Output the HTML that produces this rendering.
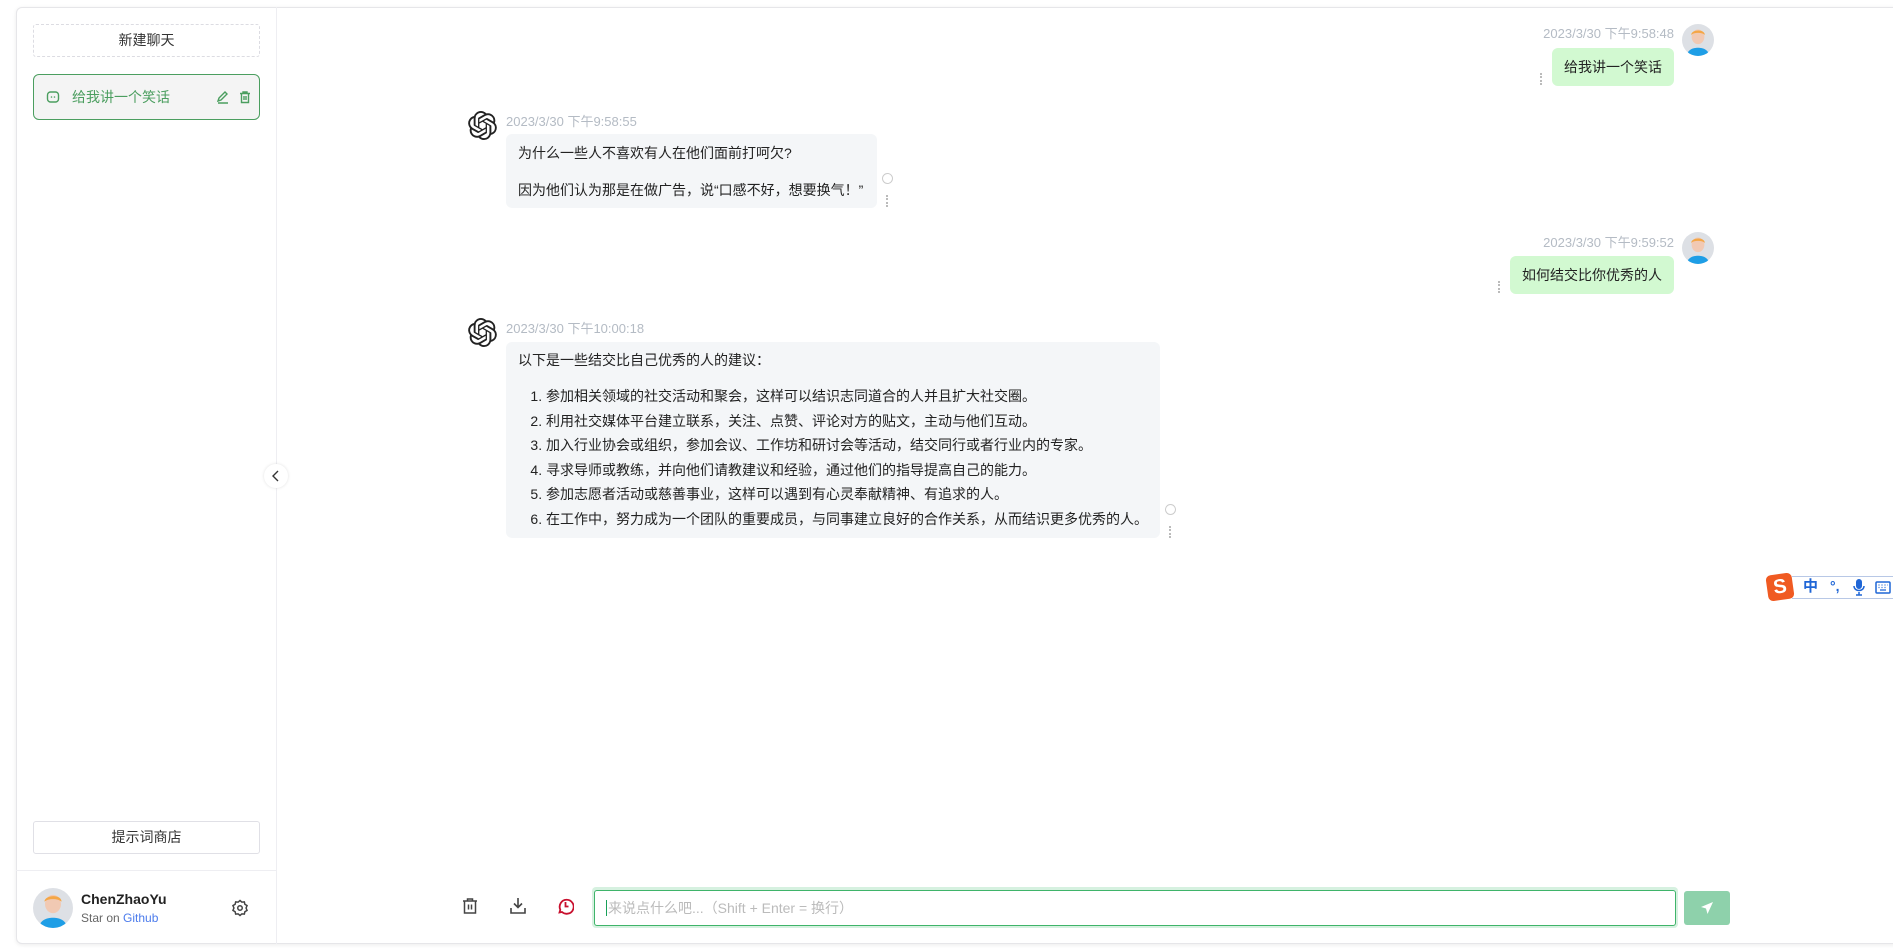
<!DOCTYPE html>
<html><head><meta charset="utf-8"><style>
*{box-sizing:border-box;margin:0;padding:0}
body{width:1893px;height:948px;overflow:hidden;background:#fff;font-family:"Liberation Sans","Noto Sans CJK SC",sans-serif;font-size:14px;color:#333;position:relative}
.abs{position:absolute}
.card{left:16px;top:7px;width:1890px;height:937px;border:1px solid #e6e6e9;border-radius:6px;box-shadow:0 1px 4px rgba(0,0,0,.08);background:#fff}
.side{left:16px;top:7px;width:261px;height:937px;border-right:1px solid #eeeef2}
.btn{border:1px solid #e0e0e6;border-radius:3px;text-align:center;color:#333;font-size:14px}
.time{color:#b4bbc4;font-size:13px}
.ub{background:#d2f9d1;border-radius:6px;color:#222;padding:0 12px;line-height:38px;font-size:14px}
.ab{background:#f4f6f8;border-radius:6px;color:#222;padding:8px 12px;font-size:14px}
.dots{width:2px;height:12px;border-left:2px dotted #bbb}
.ring{width:11px;height:11px;border:1.5px solid #ccc;border-radius:50%}
ol{padding-left:28px;margin-top:14px}
li{line-height:24.5px}
</style></head><body>
<div class="abs card"></div>
<div class="abs side"></div>
<div class="abs btn" style="left:33px;top:24px;width:227px;height:33px;line-height:31px;border:1px dashed #dcdce2">新建聊天</div>
<div class="abs" style="left:33px;top:74px;width:227px;height:46px;border:1px solid #4b9e5f;border-radius:6px;background:#f4f4f4"></div>
<svg class="abs" style="left:46px;top:90px" width="14" height="14" viewBox="0 0 14 14"><rect x="1.5" y="2" width="11" height="10" rx="3" fill="none" stroke="#4b9e5f" stroke-width="1.4"/><circle cx="5.5" cy="7" r=".8" fill="#4b9e5f"/><circle cx="8.5" cy="7" r=".8" fill="#4b9e5f"/></svg>
<div class="abs" style="left:72px;top:88px;color:#4b9e5f;font-size:14px;line-height:18px">给我讲一个笑话</div>
<svg class="abs" style="left:216px;top:90px" width="14" height="14" viewBox="0 0 14 14" fill="none" stroke="#4b9e5f" stroke-width="1.4"><path d="M2 11l1-3 6-6 2 2-6 6-3 1zM2 13h10"/></svg>
<svg class="abs" style="left:238px;top:90px" width="14" height="14" viewBox="0 0 14 14" fill="none" stroke="#4b9e5f" stroke-width="1.4"><path d="M2 3.5h10M5 3.5V2h4v1.5M3.5 3.5v9h7v-9M6 6v4M8 6v4"/></svg>
<div class="abs btn" style="left:33px;top:821px;width:227px;height:33px;line-height:31px">提示词商店</div>
<div class="abs" style="left:16px;top:870px;width:261px;border-top:1px solid #eeeef2"></div>
<svg class="abs" style="left:33px;top:888px" width="40" height="40" viewBox="0 0 35 35"><defs><clipPath id="c1"><circle cx="17.5" cy="17.5" r="17.5"/></clipPath></defs><g clip-path="url(#c1)"><rect width="35" height="35" fill="#dde0e5"/><ellipse cx="17.5" cy="14" rx="7" ry="8" fill="#f1c9b3"/><path d="M10 12c0-6 15-7 15 0-3-3-12-3-15 0z" fill="#f4a646"/><path d="M5 35c1-7 7-9 12.5-9S29 28 30 35z" fill="#1e9ee6"/></g></svg>
<div class="abs" style="left:81px;top:891px;font-weight:bold;font-size:14px;color:#222">ChenZhaoYu</div>
<div class="abs" style="left:81px;top:911px;font-size:12px;color:#666">Star on <span style="color:#4b7bec">Github</span></div>
<svg class="abs" style="left:231px;top:899px" width="18" height="18" viewBox="0 0 24 24" fill="none" stroke="#444" stroke-width="2"><path d="M12 2l2.5 2.2 3.3-.3.7 3.2 2.9 1.7-1.3 3.2 1.3 3.2-2.9 1.7-.7 3.2-3.3-.3L12 22l-2.5-2.2-3.3.3-.7-3.2-2.9-1.7L3.9 12 2.6 8.8l2.9-1.7.7-3.2 3.3.3z"/><circle cx="12" cy="12" r="3"/></svg>
<div class="abs" style="left:264px;top:464px;width:24px;height:24px;border-radius:50%;background:#fff;box-shadow:0 0 3px rgba(0,0,0,.12)"></div>
<svg class="abs" style="left:271px;top:469px" width="10" height="14" viewBox="0 0 10 14"><path d="M7 2L2 7l5 5" fill="none" stroke="#333" stroke-width="1.4"/></svg>

<div class="abs time" style="right:219px;top:23px">2023/3/30 下午9:58:48</div>
<svg class="abs" style="left:1682px;top:24px" width="32" height="32" viewBox="0 0 35 35"><defs><clipPath id="c2"><circle cx="17.5" cy="17.5" r="17.5"/></clipPath></defs><g clip-path="url(#c2)"><rect width="35" height="35" fill="#dde0e5"/><ellipse cx="17.5" cy="14" rx="7" ry="8" fill="#f1c9b3"/><path d="M10 12c0-6 15-7 15 0-3-3-12-3-15 0z" fill="#f4a646"/><path d="M5 35c1-7 7-9 12.5-9S29 28 30 35z" fill="#1e9ee6"/></g></svg>
<div class="abs ub" style="left:1552px;top:48px;width:122px;">给我讲一个笑话</div>
<div class="abs dots" style="left:1540px;top:73px"></div>

<svg class="abs" style="left:468px;top:111px" width="29" height="29" viewBox="0 0 24 24"><path fill="#222" d="M22.28 9.82a5.98 5.98 0 0 0-.52-4.91 6.05 6.05 0 0 0-6.51-2.9A6.07 6.07 0 0 0 4.98 4.18a5.98 5.98 0 0 0-4 2.9 6.05 6.05 0 0 0 .74 7.1 5.98 5.98 0 0 0 .51 4.91 6.05 6.05 0 0 0 6.52 2.9A5.98 5.98 0 0 0 13.26 24a6.06 6.06 0 0 0 5.77-4.21 5.99 5.99 0 0 0 4-2.9 6.06 6.06 0 0 0-.75-7.07zm-9.02 12.61a4.48 4.48 0 0 1-2.88-1.04l.14-.08 4.78-2.76a.8.8 0 0 0 .39-.68v-6.74l2.02 1.17a.07.07 0 0 1 .04.05v5.58a4.5 4.5 0 0 1-4.49 4.5zm-9.660-4.13a4.47 4.47 0 0 1-.53-3.01l.14.09 4.78 2.76a.77.77 0 0 0 .78 0l5.84-3.37v2.33a.08.08 0 0 1-.03.06l-4.84 2.79a4.5 4.5 0 0 1-6.14-1.65zM2.34 7.9a4.49 4.49 0 0 1 2.37-1.97v5.68a.77.77 0 0 0 .39.68l5.81 3.35-2.02 1.17a.08.08 0 0 1-.07 0L4 14.02A4.5 4.5 0 0 1 2.34 7.87zm16.6 3.86L13.1 8.36l2.02-1.16a.08.08 0 0 1 .07 0l4.83 2.79a4.49 4.49 0 0 1-.68 8.1v-5.68a.79.79 0 0 0-.41-.67zm2.01-3.02l-.14-.09-4.77-2.78a.78.78 0 0 0-.79 0L9.41 9.23V6.9a.07.07 0 0 1 .03-.06l4.83-2.79a4.5 4.5 0 0 1 6.68 4.66zM8.31 12.86l-2.02-1.16a.08.08 0 0 1-.04-.06V6.07a4.5 4.5 0 0 1 7.38-3.45l-.14.08-4.78 2.76a.8.8 0 0 0-.39.68zm1.1-2.37l2.6-1.5 2.61 1.5v3l-2.6 1.5-2.61-1.5z"/></svg>
<div class="abs time" style="left:506px;top:111px">2023/3/30 下午9:58:55</div>
<div class="abs ab" style="left:506px;top:134px;width:371px;height:74px;line-height:20px;padding-top:9px">为什么一些人不喜欢有人在他们面前打呵欠?<div style="margin-top:17px">因为他们认为那是在做广告，说“口感不好，想要换气！”</div></div>
<div class="abs ring" style="left:882px;top:173px"></div>
<div class="abs dots" style="left:886px;top:195px"></div>

<div class="abs time" style="right:219px;top:232px">2023/3/30 下午9:59:52</div>
<svg class="abs" style="left:1682px;top:232px" width="32" height="32" viewBox="0 0 35 35"><defs><clipPath id="c3"><circle cx="17.5" cy="17.5" r="17.5"/></clipPath></defs><g clip-path="url(#c3)"><rect width="35" height="35" fill="#dde0e5"/><ellipse cx="17.5" cy="14" rx="7" ry="8" fill="#f1c9b3"/><path d="M10 12c0-6 15-7 15 0-3-3-12-3-15 0z" fill="#f4a646"/><path d="M5 35c1-7 7-9 12.5-9S29 28 30 35z" fill="#1e9ee6"/></g></svg>
<div class="abs ub" style="left:1510px;top:256px;width:164px;">如何结交比你优秀的人</div>
<div class="abs dots" style="left:1498px;top:281px"></div>

<svg class="abs" style="left:468px;top:318px" width="29" height="29" viewBox="0 0 24 24"><path fill="#222" d="M22.28 9.82a5.98 5.98 0 0 0-.52-4.91 6.05 6.05 0 0 0-6.51-2.9A6.07 6.07 0 0 0 4.98 4.18a5.98 5.98 0 0 0-4 2.9 6.05 6.05 0 0 0 .74 7.1 5.98 5.98 0 0 0 .51 4.91 6.05 6.05 0 0 0 6.52 2.9A5.98 5.98 0 0 0 13.26 24a6.06 6.06 0 0 0 5.77-4.21 5.99 5.99 0 0 0 4-2.9 6.06 6.06 0 0 0-.75-7.07zm-9.02 12.61a4.48 4.48 0 0 1-2.88-1.04l.14-.08 4.78-2.76a.8.8 0 0 0 .39-.68v-6.74l2.02 1.17a.07.07 0 0 1 .04.05v5.58a4.5 4.5 0 0 1-4.49 4.5zm-9.66-4.13a4.47 4.47 0 0 1-.53-3.01l.14.09 4.78 2.76a.77.77 0 0 0 .78 0l5.84-3.37v2.33a.08.08 0 0 1-.03.06l-4.84 2.79a4.5 4.5 0 0 1-6.14-1.65zM2.34 7.9a4.49 4.49 0 0 1 2.37-1.97v5.68a.77.77 0 0 0 .39.68l5.81 3.35-2.02 1.17a.08.08 0 0 1-.07 0L4 14.02A4.5 4.5 0 0 1 2.34 7.87zm16.6 3.86L13.1 8.36l2.02-1.16a.08.08 0 0 1 .07 0l4.83 2.79a4.49 4.49 0 0 1-.68 8.1v-5.68a.79.79 0 0 0-.41-.67zm2.01-3.02l-.14-.09-4.77-2.78a.78.78 0 0 0-.79 0L9.41 9.23V6.9a.07.07 0 0 1 .03-.06l4.83-2.79a4.5 4.5 0 0 1 6.68 4.66zM8.31 12.86l-2.02-1.16a.08.08 0 0 1-.04-.06V6.07a4.5 4.5 0 0 1 7.38-3.45l-.14.08-4.78 2.76a.8.8 0 0 0-.39.68zm1.1-2.37l2.6-1.5 2.61 1.5v3l-2.6 1.5-2.61-1.5z"/></svg>
<div class="abs time" style="left:506px;top:318px">2023/3/30 下午10:00:18</div>
<div class="abs ab" style="left:506px;top:342px;width:654px;height:196px;padding-top:8px;line-height:20px">以下是一些结交比自己优秀的人的建议：
<ol>
<li>参加相关领域的社交活动和聚会，这样可以结识志同道合的人并且扩大社交圈。</li>
<li>利用社交媒体平台建立联系，关注、点赞、评论对方的贴文，主动与他们互动。</li>
<li>加入行业协会或组织，参加会议、工作坊和研讨会等活动，结交同行或者行业内的专家。</li>
<li>寻求导师或教练，并向他们请教建议和经验，通过他们的指导提高自己的能力。</li>
<li>参加志愿者活动或慈善事业，这样可以遇到有心灵奉献精神、有追求的人。</li>
<li>在工作中，努力成为一个团队的重要成员，与同事建立良好的合作关系，从而结识更多优秀的人。</li>
</ol></div>
<div class="abs ring" style="left:1165px;top:504px"></div>
<div class="abs dots" style="left:1169px;top:526px"></div>

<div class="abs" style="left:1792px;top:576px;width:101px;height:23px;border-top:1px solid #b8c8e6;border-bottom:1px solid #b8c8e6;background:#fff"></div>
<div class="abs" style="left:1767px;top:574px;width:26px;height:26px;background:#f05a22;border-radius:5px;transform:rotate(-8deg);color:#fff;font-weight:bold;font-size:20px;line-height:26px;text-align:center;font-family:'Liberation Sans',sans-serif">S</div>
<div class="abs" style="left:1803px;top:577px;color:#1f66d6;font-weight:bold;font-size:15px;line-height:20px;font-family:'Liberation Sans','Noto Sans CJK SC',sans-serif">中</div>
<div class="abs" style="left:1830px;top:576px;color:#1f66d6;font-weight:bold;font-size:14px;line-height:20px">°,</div>
<svg class="abs" style="left:1853px;top:578px" width="12" height="18" viewBox="0 0 12 18"><rect x="3" y="1" width="6" height="10" rx="3" fill="#1f66d6"/><path d="M1 8c0 6 10 6 10 0M6 14v3M3 17h6" stroke="#1f66d6" stroke-width="1.5" fill="none"/></svg>
<svg class="abs" style="left:1875px;top:581px" width="16" height="13" viewBox="0 0 16 13"><rect x="1" y="1" width="14" height="11" rx="1" fill="none" stroke="#1f66d6" stroke-width="1.5"/><path d="M3.5 4h1M6.5 4h1M9.5 4h1M12 4h.5M3.5 6.5h1M6.5 6.5h1M9.5 6.5h1M5 9h6" stroke="#1f66d6" stroke-width="1.3"/></svg>

<svg class="abs" style="left:461px;top:897px" width="18" height="18" viewBox="0 0 18 18" fill="none" stroke="#444" stroke-width="1.5"><path d="M2 4h14M6.5 4V2h5v2M3.5 4v12h11V4M7.5 7.5v5M10.5 7.5v5"/></svg>
<svg class="abs" style="left:509px;top:897px" width="18" height="18" viewBox="0 0 18 18" fill="none" stroke="#444" stroke-width="1.6"><path d="M9 1v9M5 6.5l4 4 4-4M2 11v5h14v-5"/></svg>
<svg class="abs" style="left:556px;top:897px" width="18" height="18" viewBox="0 0 18 18" fill="none" stroke="#c8102e" stroke-width="1.8"><path d="M3.5 15.5l.8-2.8A7 7 0 1 1 6 15z"/><path d="M9.5 5v4.5h3"/></svg>
<div class="abs" style="left:592px;top:887px;width:1086px;height:41px;border-radius:4px;background:#d6f1e0"></div>
<div class="abs" style="left:594px;top:890px;width:1082px;height:36px;border:1px solid #3fb46a;border-radius:3px;background:#fff;color:#bbb;font-size:14px;line-height:34px;padding-left:11px"><span style="border-left:1px solid #18a058;margin-right:1px"></span>来说点什么吧...（Shift + Enter = 换行）</div>
<div class="abs" style="left:1684px;top:891px;width:46px;height:34px;background:#8ed1ab;border-radius:3px"></div>
<svg class="abs" style="left:1699px;top:900px" width="16" height="16" viewBox="0 0 16 16"><path d="M14 2L2 7l5 1.5L8.5 14z" fill="#fff"/></svg>
</body></html>
